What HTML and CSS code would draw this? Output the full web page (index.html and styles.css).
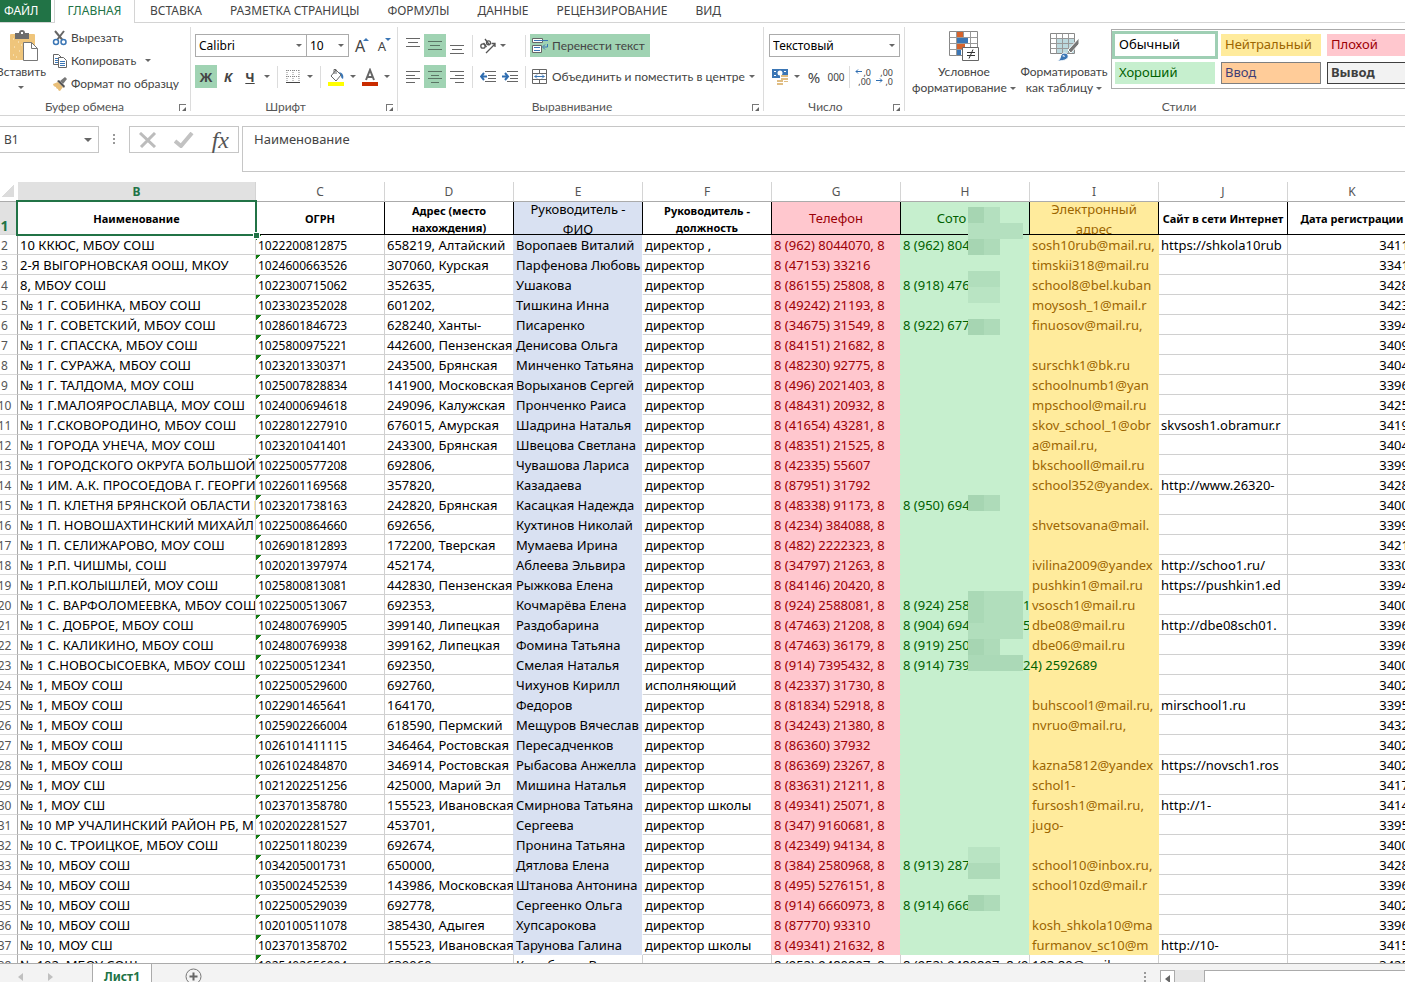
FILE: index.html
```
<!DOCTYPE html>
<html lang="ru">
<head>
<meta charset="utf-8">
<title>Лист1</title>
<link rel="stylesheet" href="styles.css">
</head>
<body>
<nav class="tabs">
  <button class="tab tab-file">ФАЙЛ</button>
  <button class="tab tab-active">ГЛАВНАЯ</button>
  <button class="tab">ВСТАВКА</button>
  <button class="tab">РАЗМЕТКА СТРАНИЦЫ</button>
  <button class="tab">ФОРМУЛЫ</button>
  <button class="tab">ДАННЫЕ</button>
  <button class="tab">РЕЦЕНЗИРОВАНИЕ</button>
  <button class="tab">ВИД</button>
</nav>

<header class="ribbon">
  <section class="group group-clipboard">
    <div class="group-body clipboard">
      <button class="big paste">
        <svg width="30" height="32" viewBox="0 0 30 32"><rect x="1" y="4" width="25" height="26" rx="1" fill="#efc57b"/><path d="M4 9h1M9 12h1M5 17h1M10 21h1M4 25h1M12 15h1M7 27h1" stroke="#fff3d8"/><path d="M6 3h4a3 3 0 0 1 6 0h4v6H6z" fill="#6d6d6d"/><rect x="12" y="2" width="2" height="2" fill="#fff"/><path d="M14.500 12.500h8l6 6v12h-14z" fill="#fff" stroke="#777"/><path d="M22.500 12.500v6h6" fill="none" stroke="#777"/></svg>
        <span>Вставить</span><span class="caret"></span>
      </button>
      <div class="stack">
        <button class="line"><svg width="16" height="16" viewBox="0 0 16 16"><path d="M3 1l7.500 9M12 1L5 10" stroke="#666" stroke-width="2" fill="none"/><circle cx="4" cy="12" r="2.500" fill="#fff" stroke="#3b76b5" stroke-width="1.500"/><circle cx="11.500" cy="12" r="2.500" fill="#fff" stroke="#3b76b5" stroke-width="1.500"/></svg>Вырезать</button>
        <button class="line"><svg width="16" height="16" viewBox="0 0 16 16"><path d="M1.500 1.500h5l3 3v7h-8z" fill="#fff" stroke="#666"/><path d="M3 5.500h4M3 7.500h4M3 9.500h4" stroke="#3b76b5"/><path d="M6.500 4.500h5l3 3v7h-8z" fill="#fff" stroke="#666"/><path d="M8 8.500h5M8 10.500h5M8 12.500h5" stroke="#3b76b5"/></svg>Копировать<span class="caret"></span></button>
        <button class="line"><svg width="16" height="16" viewBox="0 0 16 16"><path d="M1 8l5-2 5 5-3 4c-1 0-2-1-2-2-1 0-2-1-2-2-1 0-3-1-3-3z" fill="#e9bf79"/><path d="M5 5l2-1 6 6-1 2z" fill="#555"/><path d="M8 5l3 3 4-5-2-2z" fill="#777"/></svg>Формат по образцу</button>
      </div>
    </div>
    <div class="group-label">Буфер обмена<i class="launcher"></i></div>
  </section>

  <section class="group group-font">
    <div class="group-body rows">
      <div class="row">
        <label class="combo combo-font"><select aria-label="Шрифт"><option>Calibri</option></select></label>
        <label class="combo combo-size"><select aria-label="Размер"><option>10</option></select></label>
        <button class="ib grow" aria-label="Увеличить размер"><span class="glyph-a">A</span><i class="up"></i></button>
        <button class="ib shrink" aria-label="Уменьшить размер"><span class="glyph-a small">A</span><i class="down"></i></button>
      </div>
      <div class="row">
        <button class="ib on bold">Ж</button>
        <button class="ib italic">К</button>
        <button class="ib under">Ч</button>
        <span class="caret"></span><i class="sep"></i>
        <button class="ib" aria-label="Границы"><svg width="14" height="14" viewBox="0 0 14 14"><path d="M1 0v13M7 0v13M13 0v13M0 .5h14M0 6.500h14" fill="none" stroke="#888" stroke-dasharray="1 1"/><path d="M0 12.500h14" stroke="#444"/></svg></button>
        <span class="caret"></span><i class="sep"></i>
        <button class="ib" aria-label="Цвет заливки"><svg width="17" height="18" viewBox="0 0 17 18"><path d="M3 8l5-6 5 5-5 6z" fill="#fff" stroke="#666"/><path d="M6 6V1.500h2V6" fill="none" stroke="#666"/><path d="M11 4c4 1 5 4 4 7-2-1-2-2-2-4z" fill="#3b76b5"/><path d="M0 14h16v4H0z" fill="#ff0"/></svg></button>
        <span class="caret"></span>
        <button class="ib" aria-label="Цвет текста"><svg width="16" height="18" viewBox="0 0 16 18"><path d="M4 12L8 2l4 10M5.500 9h5" fill="none" stroke="#666" stroke-width="2"/><path d="M0 14h16v4H0z" fill="#c92c00"/></svg></button>
        <span class="caret"></span>
      </div>
    </div>
    <div class="group-label">Шрифт<i class="launcher"></i></div>
  </section>

  <section class="group group-align">
    <div class="group-body rows">
      <div class="row">
        <button class="ib" aria-label="По верхнему краю"><svg width="14" height="16" viewBox="0 0 14 16"><path d="M0 .5h14M2 4.500h10M0 8.500h14" stroke="#666"/></svg></button>
        <button class="ib on" aria-label="По середине"><svg width="14" height="16" viewBox="0 0 14 16"><path d="M0 3.500h14M2 7.500h10M0 11.500h14" stroke="#5b7565"/></svg></button>
        <button class="ib" aria-label="По нижнему краю"><svg width="14" height="16" viewBox="0 0 14 16"><path d="M0 7.500h14M2 11.500h10M0 15.500h14" stroke="#666"/></svg></button>
        <i class="sep"></i>
        <button class="ib" aria-label="Ориентация"><svg width="18" height="16" viewBox="0 0 18 16"><g fill="none" stroke="#555" stroke-width="1.300"><circle cx="4" cy="8" r="2.200"/><path d="M4.500 5l3 4M6 1l4.500 6"/><circle cx="9.500" cy="4.800" r="2"/><path d="M7 15l9-9M12.500 5.500H16V9"/></g></svg></button>
        <span class="caret near"></span><i class="sep"></i>
        <button class="wide on"><svg width="17" height="16" viewBox="0 0 17 16"><path d="M.5.500h10v4H.5zM.5 7.500h9v7H.5z" fill="#fff" stroke="#666"/><path d="M2 2.500h14M2 9.500h6M2 12.500h6M15.500 6v3h-4M13 6.500L10.500 9l2.500 2.500" fill="none" stroke="#3b76b5"/></svg>Перенести текст</button>
      </div>
      <div class="row">
        <button class="ib" aria-label="По левому краю"><svg width="14" height="12" viewBox="0 0 14 12"><path d="M0 .5h14M0 4.500h9M0 7.500h14M0 11.500h9" stroke="#666"/></svg></button>
        <button class="ib on" aria-label="По центру"><svg width="14" height="12" viewBox="0 0 14 12"><path d="M0 .5h14M3 4.500h8M0 7.500h14M3 11.500h8" stroke="#5b7565"/></svg></button>
        <button class="ib" aria-label="По правому краю"><svg width="14" height="12" viewBox="0 0 14 12"><path d="M0 .5h14M5 4.500h9M0 7.500h14M5 11.500h9" stroke="#666"/></svg></button>
        <i class="sep"></i>
        <button class="ib" aria-label="Уменьшить отступ"><svg width="16" height="12" viewBox="0 0 16 12"><path d="M5 .5h11M8 4.500h8M8 7.500h8M5 10.500h11" stroke="#666"/><path d="M7 5.500H1M4 2L1 5.500 4 9" fill="none" stroke="#2f6db0" stroke-width="2"/></svg></button>
        <button class="ib" aria-label="Увеличить отступ"><svg width="16" height="12" viewBox="0 0 16 12"><path d="M5 .5h11M8 4.500h8M8 7.500h8M5 10.500h11" stroke="#666"/><path d="M0 5.500h6M3 2l3 3.500L3 9" fill="none" stroke="#2f6db0" stroke-width="2"/></svg></button>
        <i class="sep"></i>
        <button class="wide merge"><svg width="17" height="16" viewBox="0 0 17 16"><path d="M.5.500h14v14H.5zM.5 4.500h14M.5 10.500h14M7.500.500v4M7.500 10.500v4" fill="#fff" stroke="#666"/><path d="M2.500 7.500h10M5 5.500l-2 2 2 2M10 5.500l2 2-2 2" fill="none" stroke="#3b76b5"/></svg>Объединить и поместить в центре</button>
        <span class="caret"></span>
      </div>
    </div>
    <div class="group-label">Выравнивание<i class="launcher"></i></div>
  </section>

  <section class="group group-number">
    <div class="group-body rows">
      <div class="row">
        <label class="combo combo-format"><select aria-label="Числовой формат"><option>Текстовый</option></select></label>
      </div>
      <div class="row">
        <button class="ib" aria-label="Финансовый формат"><svg width="17" height="17" viewBox="0 0 17 17"><path d="M0 1h16v9H0z" fill="#3b76b5"/><path d="M2 3h2v1H2zM12 3h2v1h-2zM2 7h2v1H2z" fill="#fff"/><circle cx="8" cy="5" r="2.500" fill="#fff"/><path d="M8 7h9v10H4v-6h4z" fill="#fff"/><path d="M9 7h7v2H9zM9 10h7v2H9zM5 12h6v2H5zM5 15h6v2H5zM12 13h4v1h-4z" fill="#e0bd83"/></svg></button>
        <span class="caret"></span>
        <button class="ib percent">%</button>
        <button class="ib thousands">000</button>
        <i class="sep"></i>
        <button class="ib decimals inc"><span>,0</span><span>,00</span><svg width="7" height="5" viewBox="0 0 7 5"><path d="M7 2.500H1M3 .5l-2 2 2 2" fill="none" stroke="#2f6db0"/></svg></button>
        <button class="ib decimals dec"><span>,00</span><span>,0</span><svg width="7" height="5" viewBox="0 0 7 5"><path d="M0 2.500h6M4 .5l2 2-2 2" fill="none" stroke="#2f6db0"/></svg></button>
      </div>
    </div>
    <div class="group-label">Число<i class="launcher"></i></div>
  </section>

  <section class="group group-styles">
    <div class="group-body styles">
      <button class="big cond">
        <svg width="31" height="31" viewBox="0 0 31 31"><path d="M.5.500h28v24H.5z" fill="#fff" stroke="#888"/><path d="M8 1h6v5H8zM8 13h8v5H8z" fill="#d6632c"/><path d="M8 7h11v5H8zM8 19h4v5H8z" fill="#3b76b5"/><path d="M7.500.500v24M14.500.500v6M21.500.500v24M.5 6.500h28M.5 12.500h28M.5 18.500h28" fill="none" stroke="#999"/><path d="M13.500 16.500h16v13h-16z" fill="#fff" stroke="#666"/><path d="M18 21.500h8M18 24.500h8M24 18.500l-4 9" stroke="#333"/></svg>
        <span>Условное</span><span>форматирование <i class="caret"></i></span>
      </button>
      <button class="big fmt">
        <svg width="31" height="31" viewBox="0 0 31 31"><path d="M1.500 2.500h24v20h-24z" fill="#fff" stroke="#888"/><path d="M8 8h17v14H8z" fill="#bcd9de"/><path d="M7.500 2.500v20M13.500 2.500v20M19.500 2.500v20M1.500 7.500h24M1.500 12.500h24M1.500 17.500h24" fill="none" stroke="#999"/><path d="M30 7v6l-8 9-3-3z" fill="#777" stroke="#fff"/><path d="M8 30c3-1 3-3 4-6 2-3 6-2 7 0 1 4-3 6-11 6z" fill="#3b76b5" stroke="#fff"/><path d="M13 25l2-1 1 2z" fill="#fff"/></svg>
        <span>Форматировать</span><span>как таблицу <i class="caret"></i></span>
      </button>
      <div class="gallery">
        <button class="style s-normal">Обычный</button>
        <button class="style s-neutral">Нейтральный</button>
        <button class="style s-bad">Плохой</button>
        <button class="style s-good">Хороший</button>
        <button class="style s-input">Ввод</button>
        <button class="style s-output">Вывод</button>
      </div>
    </div>
    <div class="group-label">Стили</div>
  </section>
</header>

<div class="formula-bar">
  <div class="name-box"><input class="name-input" aria-label="Имя" value="B1"><span class="caret dark"></span></div>
  <i class="dots"></i>
  <div class="fx">
    <button aria-label="Отмена"><svg width="18" height="16" viewBox="0 0 18 16"><path d="M1 1l15 14M16 1L2 15" stroke="#bcbcbc" stroke-width="3"/></svg></button>
    <button aria-label="Ввод"><svg width="20" height="16" viewBox="0 0 20 16"><path d="M1 9l6 5L18 1" fill="none" stroke="#c2c2c2" stroke-width="4"/></svg></button>
    <button class="fx-label">fx</button>
  </div>
  <input class="formula" aria-label="Строка формул" value="Наименование">
</div>

<main class="sheet">
  <div class="canvas">
    <table class="grid">
      <colgroup><col class="c-num"><col class="c-name"><col class="c-std" span="9"></colgroup>
      <thead>
        <tr class="letters"><th class="corner"></th><th class="sel">B</th><th>C</th><th>D</th><th>E</th><th>F</th><th>G</th><th>H</th><th>I</th><th>J</th><th>K</th></tr>
      </thead>
      <tbody id="rows">
        <tr class="titles"><th>1</th><td class="selected">Наименование</td><td>ОГРН</td><td><div class="two">Адрес (место нахождения)</div></td><td class="blue"><div class="two large">Руководитель - ФИО</div></td><td><div class="two">Руководитель - должность</div></td><td class="red">Телефон</td><td class="green">Сото<i class="gap-short"></i></td><td class="yellow"><div class="two large">Электронный адрес</div></td><td>Сайт в сети Интернет</td><td>Дата регистрации</td></tr>
      </tbody>
    </table>
    <div class="mosaic" id="mosaic"></div>
  </div>
</main>

<footer class="sheet-bar">
  <button class="nav-arrow prev" aria-label="Назад"></button>
  <button class="nav-arrow next" aria-label="Вперёд"></button>
  <button class="sheet-tab">Лист1</button>
  <button class="add" aria-label="Новый лист"><svg width="17" height="17" viewBox="0 0 17 17"><circle cx="8.500" cy="8.500" r="7.500" fill="none" stroke="#777"/><path d="M8.500 4.500v8M4.500 8.500h8" stroke="#666" stroke-width="2"/></svg></button>
  <i class="dots"></i>
  <div class="hscroll"><button class="scroll-left" aria-label="Влево"></button><div class="thumb"></div></div>
</footer>
<script src="app.js"></script>
</body>
</html>
```
FILE: styles.css
```
* { box-sizing: border-box; }
body {
  margin: 0;
  height: 100vh;
  display: flex;
  flex-direction: column;
  overflow: hidden;
  background: #fff;
  color: #444;
  font: 12px/16px Lato, "Noto Sans", sans-serif;
}
button, input, select { font: inherit; color: inherit; margin: 0; padding: 0; border: 0; background: none; border-radius: 0; }
button { white-space: nowrap; }
svg { display: block; flex: none; }

/* Ribbon tabs */
.tabs { display: flex; height: 23px; flex: none; border-bottom: 1px solid #d4d4d4; font-family: "Noto Sans", sans-serif; }
.tab { height: 22px; padding: 0 14px; line-height: 22px; }
.tab-file { width: 51px; padding: 0 13px 0 4px; background: #217346; color: #fff; margin-right: 3px; }
.tab-active { height: 23px; width: 81px; margin-right: 1px; padding: 0 0 1px; color: #217346; background: #fff; border: solid #d4d4d4; border-width: 0 1px; }

/* Ribbon */
.ribbon { display: flex; height: 93px; flex: none; border-bottom: 1px solid #d4d4d4; overflow: hidden; }
.group { display: flex; flex-direction: column; flex: none; position: relative; padding: 0 4px; }
.group::after { content: ""; position: absolute; right: 0; top: 4px; bottom: 4px; width: 1px; background: #dcdcdc; }
.group-clipboard { width: 191px; padding-left: 0; }
.group-font { width: 207px; }
.group-align { width: 366px; }
.group-number { width: 141px; }
.group-styles { width: 548px; }
.group-body { height: 75px; }
.group-label { position: relative; height: 17px; text-align: center; line-height: 18px; color: #555; padding-right: 18px; }
.group-styles .group-label { padding: 0; }
.launcher { position: absolute; right: 1px; top: 6px; width: 7px; height: 7px; border: solid #777; border-width: 1px 0 0 1px; }
.launcher::after { content: ""; position: absolute; right: 0; bottom: 0; border: 2px solid #666; border-color: transparent #666 #666 transparent; }
.caret { display: inline-block; flex: none; width: 0; height: 0; border: solid transparent; border-width: 3px 3px 0; border-top-color: #666; }
.caret.dark { border-width: 4px 4px 0; }

.clipboard { display: flex; }
.big { display: flex; flex-direction: column; align-items: center; flex: none; }
.paste { width: 48px; padding-top: 7px; margin-left: -3px; }
.paste span:not(.caret) { padding-top: 2px; }
.paste svg { margin-left: 6px; }
.paste .caret { margin-top: 6px; }
.stack { display: flex; flex-direction: column; padding: 3px 0 0 7px; }
.line { display: flex; align-items: center; gap: 3px; height: 23px; }
.line .caret { margin-left: 6px; }

.rows { display: flex; flex-direction: column; gap: 8px; padding-top: 11px; }
.row { display: flex; align-items: center; height: 23px; }
.ib { position: relative; width: 22px; height: 23px; flex: none; display: flex; align-items: center; justify-content: center; }
.on { background: #a0d3b3; }
.row > .caret { margin: 0 3px; }
.row > .caret.near { margin: 0 15px 0 1px; }
.sep { width: 1px; height: 22px; background: #dcdcdc; margin: 0 4px; flex: none; }
.combo { position: relative; display: flex; height: 23px; border: 1px solid #ababab; color: #000; background: #fff; }
.combo select { width: 100%; padding-left: 3px; appearance: none; font-family: "Noto Sans", sans-serif; outline: 0; }
.combo::after { content: ""; position: absolute; right: 4px; top: 9px; border: solid transparent; border-width: 3px 3px 0; border-top-color: #666; }
.combo-font { width: 112px; }
.combo-size { width: 43px; margin-left: -1px; }
.combo-format { width: 131px; }
.group-number .row { padding-left: 1px; }
.group-number .sep { margin: 0 2px; }
.glyph-a { font: 16px "Noto Sans", sans-serif; }
.glyph-a.small { font-size: 13px; }
.up, .down { position: absolute; right: 2px; top: 4px; border: solid transparent; border-width: 0 3px 3px; border-bottom-color: #3b76b5; }
.down { border-width: 3px 3px 0; border-top-color: #3b76b5; }
.bold, .italic, .under { font: bold 13px "Noto Sans", sans-serif; }
.italic { font-style: italic; }
.under { text-decoration: underline; }
.wide { display: flex; align-items: center; gap: 3px; height: 23px; padding: 0 5px 0 2px; }
.merge { padding-right: 1px; }
.percent { font: 15px "Noto Sans", sans-serif; }
.thousands { font: 10px "Noto Sans", sans-serif; }
.decimals { flex-direction: column; align-items: flex-end; justify-content: center; font: 9px/9px "Noto Sans", sans-serif; padding-right: 3px; }
.decimals svg { position: absolute; left: 3px; top: 4px; }
.dec svg { left: 2px; top: 13px; }

.styles { display: flex; }
.cond { width: 110px; padding-top: 8px; }
.fmt { width: 90px; padding-top: 8px; }
.cond svg, .fmt svg { margin-bottom: 2px; }
.big .caret { vertical-align: middle; }
.gallery { margin: 6px 0 0 2px; height: 60px; border: 1px solid #ababab; padding: 4px 3px; display: grid; grid-template-columns: 100px 100px 100px; grid-template-rows: 22px 22px; gap: 6px; font: 13px "Noto Sans", sans-serif; }
.style { text-align: left; padding: 0 0 2px 4px; line-height: 18px; }
.s-normal { color: #000; outline: 3px solid #9fcfb4; }
.s-neutral { background: #ffeb9c; color: #9c6500; }
.s-bad { background: #ffc7ce; color: #9c0006; }
.s-good { background: #c6efce; color: #006100; }
.s-input { background: #ffcc99; color: #3f3f76; border: 1px solid #7f7f7f; padding-left: 3px; }
.s-output { background: #f2f2f2; color: #3f3f3f; border: 1px solid #3f3f3f; padding-left: 3px; font-weight: bold; }

/* Formula bar */
.formula-bar { display: flex; align-items: flex-start; flex: none; height: 66px; padding-top: 10px; font: 13px "Noto Sans", sans-serif; }
.name-box { display: flex; align-items: center; width: 99px; height: 27px; border: 1px solid #c6c6c6; border-left: 0; padding: 0 6px 0 4px; }
.name-input { flex: 1; min-width: 0; font-size: 12px; }
.dots { width: 2px; height: 11px; margin: 8px 14px; flex: none; background: repeating-linear-gradient(#999 0 2px, transparent 2px 4px); }
.fx { display: flex; align-items: center; justify-content: space-between; width: 110px; height: 27px; border: 1px solid #c6c6c6; padding: 0 9px; }
.fx-label { font: italic 24px/22px "Liberation Serif", serif; color: #555; }
.formula { flex: 1; height: 46px; margin-left: 3px; border: 1px solid #c6c6c6; border-right: 0; padding: 0 11px 20px; }

/* Worksheet */
.sheet { flex: 1; min-height: 0; overflow: hidden; }
.canvas { position: relative; margin-left: -8px; }
.grid { table-layout: fixed; width: 1425px; border-collapse: separate; border-spacing: 0; color: #000; font: 13px/17px "Noto Sans", sans-serif; }
.c-num { width: 26px; }
.c-name { width: 238px; }
.c-std { width: 129px; }
.grid th, .grid td { padding: 0; height: 20px; white-space: nowrap; overflow: hidden; }
.grid th { font-weight: normal; color: #555; font-size: 12px; border-right: 1px solid #ababab; border-bottom: 1px solid #d8d8d8; }
.body th { padding-top: 2px; }
.letters th { border-right-color: #d4d4d4; border-bottom-color: #ababab; }
.letters .sel, .titles th { background: #e1e1e1; color: #217346; font-weight: bold; }
.letters .corner { background: linear-gradient(135deg, transparent 50%, #dcdcdc 50%) 10px 3px / 12px 12px no-repeat; border-right-color: #fff; }
.grid td { padding: 2px 2px 0; border-right: 1px solid #d0d0d0; border-bottom: 1px solid #d0d0d0; }
.grid .titles td { height: 33px; padding: 0; border-color: #000; text-align: center; font-size: 11px; font-weight: bold; }
.grid .titles th { vertical-align: bottom; font-size: 14px; }
.grid .titles .red, .grid .titles .green { font-size: 13px; font-weight: normal; }
.two { height: 32px; line-height: 17px; white-space: normal; overflow: hidden; padding: 0 20px; }
.two.large { font-size: 13px; font-weight: normal; line-height: 20px; margin-top: -3px; height: 35px; padding: 0 12px; }
.grid td.selected { position: relative; overflow: visible; }
.selected::before { content: ""; position: absolute; inset: -2px; border: 2px solid #217346; }
.selected::after { content: ""; position: absolute; right: -4px; bottom: -4px; width: 5px; height: 5px; background: #217346; outline: 1px solid #fff; }
.grid .ogrn { font-size: 12px; background: linear-gradient(135deg, #107c10 50%, transparent 50%) 0 0 / 5px 5px no-repeat; }
.grid .edge-blue { border-right-color: #d9e1f2; }
.grid .blue { background: #d9e1f2; }
.body .blue { border-color: #d9e1f2; border-right-color: #fff; }
.grid .edge-red { border-right-color: #ffc7ce; }
.grid .red { background: #ffc7ce; color: #9c0006; }
.body .red { border-color: #ffc7ce; border-right-color: #c6efce; }
.grid .green { background: #c6efce; color: #006100; }
.body .green { border-color: #c6efce; border-right-color: #ffeb9c; }
.grid .yellow { background: #ffeb9c; color: #9c6500; }
.body .yellow { border-color: #ffeb9c; }
.grid .spill { overflow: visible; position: relative; z-index: 1; }
.grid .date { text-align: right; padding-right: 7px; }
.gap { display: inline-block; width: 46px; }
.gap-short { display: inline-block; width: 27px; }
.mosaic i { position: absolute; z-index: 2; }

/* Sheet tabs */
.sheet-bar { display: flex; flex: none; height: 19px; overflow: hidden; background: #f3f3f3; border-top: 1px solid #ababab; }
.nav-arrow { width: 0; height: 0; margin: 9px 0 0 18px; border: solid transparent; border-width: 4px 5px 4px 0; border-right-color: #c0c0c0; }
.next { margin-left: 25px; border-width: 4px 0 4px 5px; border-left-color: #c0c0c0; }
.sheet-tab { width: 60px; height: 26px; margin: -1px 0 0 39px; background: #fff; color: #217346; font: bold 12px "Noto Sans", sans-serif; border: solid #ababab; border-width: 0 1px; flex: none; }
.add { margin: 4px 0 0 33px; height: 17px; }
.sheet-bar .dots { margin: 8px 14px 0 auto; }
.hscroll { display: flex; width: 245px; height: 17px; margin-top: 6px; flex: none; background: #e6e6e6; }
.scroll-left { width: 15px; border: 1px solid #ababab; background: #fff; display: grid; place-items: center; }
.scroll-left::before { content: ""; border: solid transparent; border-width: 4px 5px 4px 0; border-right-color: #666; }
.thumb { flex: 1; margin-left: 29px; background: #fff; border: 1px solid #ababab; border-right: 0; }
```
FILE: app.js
```
// name | ogrn | address | head | position ("-" = директор) | phone | mobile | mail | site | date
const data = `10 ККЮС, МБОУ СОШ|1022200812875|658219, Алтайский|Воропаев Виталий|директор ,|8 (962) 8044070, 8|8 (962) 804|sosh10rub@mail.ru,|https://shkola10rub|3411
2-Я ВЫГОРНОВСКАЯ ООШ, МКОУ|1024600663526|307060, Курская|Парфенова Любовь|-|8 (47153) 33216||timskii318@mail.ru||3341
8, МБОУ СОШ|1022300715062|352635,|Ушакова|-|8 (86155) 25808, 8|8 (918) 476|school8@bel.kuban||3428
№ 1 Г. СОБИНКА, МБОУ СОШ|1023302352028|601202,|Тишкина Инна|-|8 (49242) 21193, 8||moysosh_1@mail.r||3423
№ 1 Г. СОВЕТСКИЙ, МБОУ СОШ|1028601846723|628240, Ханты-|Писаренко|-|8 (34675) 31549, 8|8 (922) 677|finuosov@mail.ru,||3394
№ 1 Г. СПАССКА, МБОУ СОШ|1025800975221|442600, Пензенская|Денисова Ольга|-|8 (84151) 21682, 8||||3409
№ 1 Г. СУРАЖА, МБОУ СОШ|1023201330371|243500, Брянская|Минченко Татьяна|-|8 (48230) 92775, 8||surschk1@bk.ru||3404
№ 1 Г. ТАЛДОМА, МОУ СОШ|1025007828834|141900, Московская|Ворыханов Сергей|-|8 (496) 2021403, 8||schoolnumb1@yan||3396
№ 1 Г.МАЛОЯРОСЛАВЦА, МОУ СОШ|1024000694618|249096, Калужская|Пронченко Раиса|-|8 (48431) 20932, 8||mpschool@mail.ru||3425
№ 1 Г.СКОВОРОДИНО, МБОУ СОШ|1022801227910|676015, Амурская|Шадрина Наталья|-|8 (41654) 43281, 8||skov_school_1@obr|skvsosh1.obramur.r|3419
№ 1 ГОРОДА УНЕЧА, МОУ СОШ|1023201041401|243300, Брянская|Швецова Светлана|-|8 (48351) 21525, 8||a@mail.ru,||3404
№ 1 ГОРОДСКОГО ОКРУГА БОЛЬШОЙ|1022500577208|692806,|Чувашова Лариса|-|8 (42335) 55607||bkschooll@mail.ru||3399
№ 1 ИМ. А.К. ПРОСОЕДОВА Г. ГЕОРГИ|1022601169568|357820,|Казадаева|-|8 (87951) 31792||school352@yandex.|http://www.26320-|3428
№ 1 П. КЛЕТНЯ БРЯНСКОЙ ОБЛАСТИ И|1023201738163|242820, Брянская|Касацкая Надежда|-|8 (48338) 91173, 8|8 (950) 694|||3400
№ 1 П. НОВОШАХТИНСКИЙ МИХАЙЛ|1022500864660|692656,|Кухтинов Николай|-|8 (4234) 384088, 8||shvetsovana@mail.||3399
№ 1 П. СЕЛИЖАРОВО, МОУ СОШ|1026901812893|172200, Тверская|Мумаева Ирина|-|8 (482) 2222323, 8||||3421
№ 1 Р.П. ЧИШМЫ, СОШ|1020201397974|452174,|Аблеева Эльвира|-|8 (34797) 21263, 8||ivilina2009@yandex|http://schoo1.ru/|3330
№ 1 Р.П.КОЛЫШЛЕЙ, МОУ СОШ|1025800813081|442830, Пензенская|Рыжкова Елена|-|8 (84146) 20420, 8||pushkin1@mail.ru|https://pushkin1.ed|3394
№ 1 С. ВАРФОЛОМЕЕВКА, МБОУ СОШ|1022500513067|692353,|Кочмарёва Елена|-|8 (924) 2588081, 8|8 (924) 258~91|vsosch1@mail.ru||3400
№ 1 С. ДОБРОЕ, МБОУ СОШ|1024800769905|399140, Липецкая|Раздобарина|-|8 (47463) 21208, 8|8 (904) 694~95|dbe08@mail.ru|http://dbe08sch01.|3396
№ 1 С. КАЛИКИНО, МБОУ СОШ|1024800769938|399162, Липецкая|Фомина Татьяна|-|8 (47463) 36179, 8|8 (919) 250|dbe06@mail.ru||3396
№ 1 С.НОВОСЫСОЕВКА, МБОУ СОШ|1022500512341|692350,|Смелая Наталья|-|8 (914) 7395432, 8|8 (914) 739~924) 2592689|||3400
№ 1, МБОУ СОШ|1022500529600|692760,|Чихунов Кирилл|исполняющий|8 (42337) 31730, 8||||3402
№ 1, МБОУ СОШ|1022901465641|164170,|Федоров|-|8 (81834) 52918, 8||buhscool1@mail.ru,|mirschool1.ru|3395
№ 1, МБОУ СОШ|1025902266004|618590, Пермский|Мещуров Вячеслав|-|8 (34243) 21380, 8||nvruo@mail.ru,||3432
№ 1, МБОУ СОШ|1026101411115|346464, Ростовская|Пересадченков|-|8 (86360) 37932||||3402
№ 1, МБОУ СОШ|1026102484870|346914, Ростовская|Рыбасова Анжелла|-|8 (86369) 23267, 8||kazna5812@yandex|https://novsch1.ros|3402
№ 1, МОУ СШ|1021202251256|425000, Марий Эл|Мишина Наталья|-|8 (83631) 21211, 8||schol1-||3417
№ 1, МОУ СШ|1023701358780|155523, Ивановская|Смирнова Татьяна|директор школы|8 (49341) 25071, 8||fursosh1@mail.ru,|http://1-|3414
№ 10 МР УЧАЛИНСКИЙ РАЙОН РБ, М|1020202281527|453701,|Сергеева|-|8 (347) 9160681, 8||jugo-||3395
№ 10 С. ТРОИЦКОЕ, МБОУ СОШ|1022501180239|692674,|Пронина Татьяна|-|8 (42349) 94134, 8||||3400
№ 10, МБОУ СОШ|1034205001731|650000,|Дятлова Елена|-|8 (384) 2580968, 8|8 (913) 287|school10@inbox.ru,||3428
№ 10, МБОУ СОШ|1035002452539|143986, Московская|Штанова Антонина|-|8 (495) 5276151, 8||school10zd@mail.r||3396
№ 10, МБОУ СОШ|1022500529039|692778,|Сергеенко Ольга|-|8 (914) 6660973, 8|8 (914) 666|||3402
№ 10, МБОУ СОШ|1020100511078|385430, Адыгея|Хупсарокова|-|8 (87770) 93310||kosh_shkola10@ma||3396
№ 10, МОУ СШ|1023701358702|155523, Ивановская|Тарунова Галина|директор школы|8 (49341) 21632, 8||furmanov_sc10@m|http://10-|3415
№ 102, МБОУ СОШ|1025402656904|630060,|Коробкина В|  |8 (952) 9480897, 8|8 (952) 9480897, 8 (91|192.80@mail||3425`.split("\n");

const filled = ["", "ogrn", "edge-blue", "blue", "edge-red", "red", "green", "yellow", "", "date"];
const plain = ["", "ogrn", "", "", "", "", "", "", "", "date"];
const tbody = document.getElementById("rows");

data.forEach((line, r) => {
  const tr = document.createElement("tr");
  tr.className = "body";
  const th = document.createElement("th");
  th.textContent = r + 2;
  tr.append(th);
  const classes = r === data.length - 1 ? plain : filled;
  line.split("|").forEach((text, c) => {
    const td = document.createElement("td");
    td.className = classes[c];
    const [head, tail] = (text === "-" ? "директор" : text).split("~");
    td.append(head);
    if (tail) {
      const gap = document.createElement("i");
      gap.className = "gap";
      td.append(gap, tail);
      if (tail.length > 3) td.classList.add("spill");
    }
    tr.append(td);
  });
  tbody.append(tr);
});

// Pixelated patches over the mobile numbers: x, y, width, height, colour
const patches = [
  [976, 25, 16, 16, "#a6d5b2"], [992, 25, 16, 16, "#b4e0bf"], [976, 41, 55, 16, "#b4e0bf"],
  [976, 57, 16, 16, "#a6d5b2"], [992, 57, 16, 16, "#aedbb9"],
  [976, 89, 32, 16, "#b1debc"], [976, 105, 32, 16, "#b9e4c3"],
  [976, 137, 16, 16, "#a6d5b2"], [992, 137, 16, 16, "#aedbb9"],
  [976, 313, 16, 16, "#a6d5b2"], [992, 313, 16, 16, "#aedbb9"],
  [976, 409, 55, 48, "#b1debc"], [976, 409, 16, 32, "#aad9b6"], [976, 457, 16, 16, "#a6d5b2"],
  [992, 457, 16, 16, "#aedbb9"], [976, 473, 55, 16, "#abd9b7"],
  [976, 665, 32, 16, "#b9e4c3"], [976, 681, 32, 16, "#aedbb9"],
  [976, 713, 16, 16, "#a6d5b2"], [992, 713, 16, 16, "#aedbb9"]
];
const mosaic = document.getElementById("mosaic");
for (const [x, y, w, h, color] of patches) {
  const patch = document.createElement("i");
  patch.style.cssText = `left:${x}px;top:${y}px;width:${w}px;height:${h}px;background:${color}`;
  mosaic.append(patch);
}
```
